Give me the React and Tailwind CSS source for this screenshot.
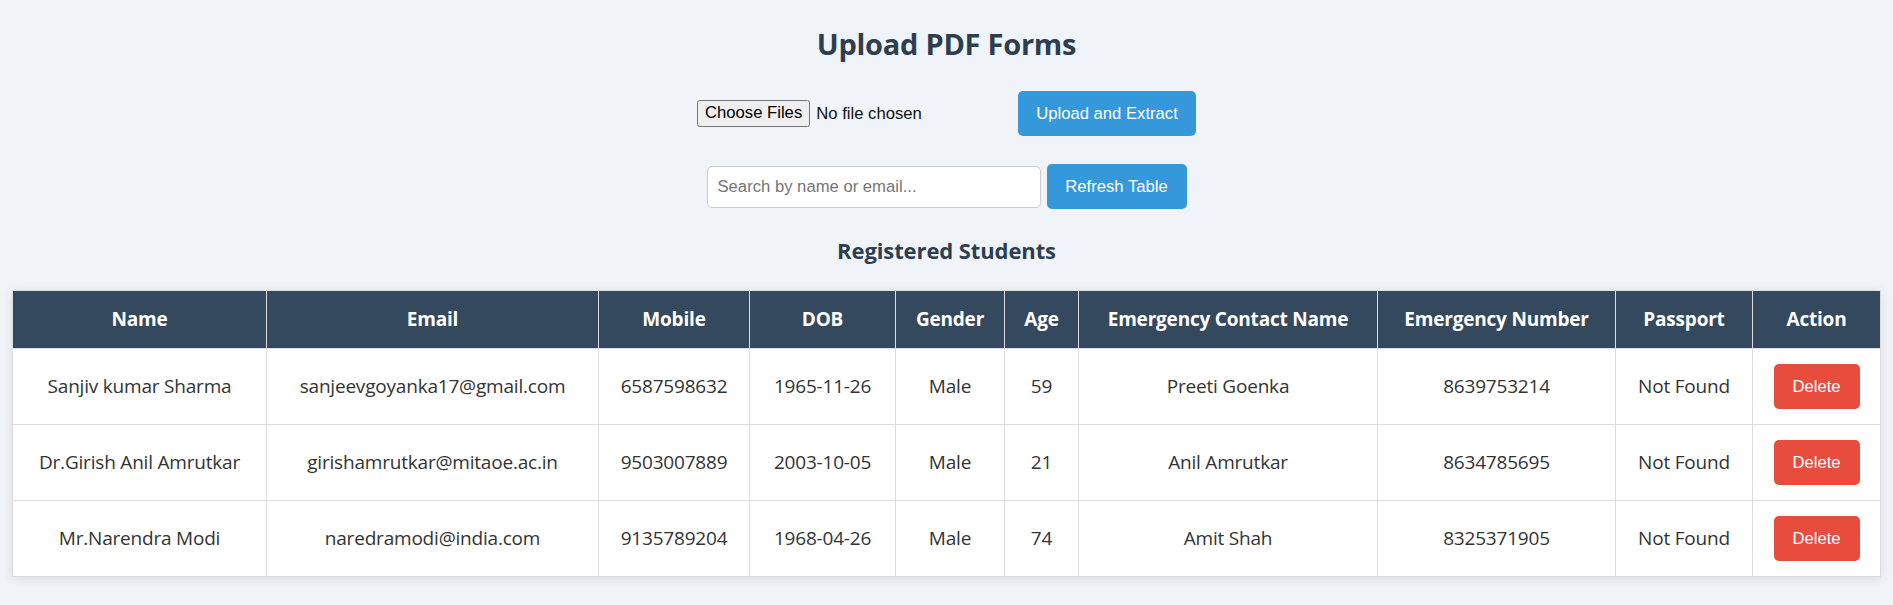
const students = [
  { name: "Sanjiv kumar Sharma", email: "sanjeevgoyanka17@gmail.com", mobile: "6587598632", dob: "1965-11-26", gender: "Male", age: 59, ecName: "Preeti Goenka", ecNumber: "8639753214", passport: "Not Found" },
  { name: "Dr.Girish Anil Amrutkar", email: "girishamrutkar@mitaoe.ac.in", mobile: "9503007889", dob: "2003-10-05", gender: "Male", age: 21, ecName: "Anil Amrutkar", ecNumber: "8634785695", passport: "Not Found" },
  { name: "Mr.Narendra Modi", email: "naredramodi@india.com", mobile: "9135789204", dob: "1968-04-26", gender: "Male", age: 74, ecName: "Amit Shah", ecNumber: "8325371905", passport: "Not Found" },
];

const cols = [
  ["Name", "w-[254px]"],
  ["Email", "w-[332px]"],
  ["Mobile", "w-[151px]"],
  ["DOB", "w-[146px]"],
  ["Gender", "w-[109px]"],
  ["Age", "w-[74px]"],
  ["Emergency Contact Name", "w-[299px]"],
  ["Emergency Number", "w-[238px]"],
  ["Passport", "w-[137px]"],
  ["Action", "w-[128px]"],
];

const ui = "font-['Segoe_UI','Open_Sans',sans-serif]";
const arial = "font-['Liberation_Sans',Arial,sans-serif]";
const cell = "border border-[#ddd] px-[15px] py-[15px]";

export default function App() {
  return (
    <div className={`min-h-screen bg-[#f0f4f8] ${ui}`}>
      <div className="px-3 pt-[24px] pb-6">
        <h2 className="text-center text-[29px] leading-[40px] tracking-[-0.25px] font-bold text-[#2c3e50]">Upload PDF Forms</h2>

        {/* Upload row */}
        <div className="flex justify-center items-center mt-[27px] h-[45px]">
          <div className={`w-[308px] flex items-center gap-[6px] ${arial} text-[16.67px]`}>
            <button className="h-[27px] px-[7px] bg-[#efefef] border border-[#767676] rounded-[2.5px] text-black leading-none">Choose Files</button>
            <span className="text-[#111]">No file chosen</span>
          </div>
          <button className={`ml-[13px] h-[45px] w-[178px] bg-[#3498db] text-white rounded-[5px] ${arial} text-[16.67px]`}>
            Upload and Extract
          </button>
        </div>

        {/* Search row */}
        <div className="flex justify-center items-center gap-[6px] mt-[28px] h-[45px]">
          <input
            placeholder="Search by name or email..."
            className={`w-[334px] h-[42px] px-[10px] bg-white border border-[#ccc] rounded-[5px] ${arial} text-[16.67px] placeholder:text-[#757575] outline-none`}
          />
          <button className={`h-[45px] w-[140px] bg-[#3498db] text-white rounded-[5px] ${arial} text-[16.67px]`}>
            Refresh Table
          </button>
        </div>

        <h3 className="text-center text-[22px] leading-[32px] tracking-[-0.1px] font-bold text-[#2c3e50] mt-[25px]">Registered Students</h3>

        <table className="mt-[24px] w-[1868px] table-fixed border-collapse bg-white shadow-[0_2px_10px_rgba(0,0,0,0.1)]">
          <thead>
            <tr className="bg-[#34495e] text-white">
              {cols.map(([h, w]) => (
                <th key={h} className={`${w} ${cell} text-[19px] leading-[27px] tracking-[-0.2px] font-bold text-center`}>{h}</th>
              ))}
            </tr>
          </thead>
          <tbody>
            {students.map(s => (
              <tr key={s.email} className="text-[19px] tracking-[-0.2px] text-[#333] text-center">
                <td className={cell}>{s.name}</td>
                <td className={cell}>{s.email}</td>
                <td className={cell}>{s.mobile}</td>
                <td className={cell}>{s.dob}</td>
                <td className={cell}>{s.gender}</td>
                <td className={cell}>{s.age}</td>
                <td className={cell}>{s.ecName}</td>
                <td className={cell}>{s.ecNumber}</td>
                <td className={cell}>{s.passport}</td>
                <td className={cell}>
                  <button className={`h-[45px] w-[86px] bg-[#e74c3c] text-white rounded-[5px] align-middle tracking-normal ${arial} text-[16.67px]`}>Delete</button>
                </td>
              </tr>
            ))}
          </tbody>
        </table>
      </div>
    </div>
  );
}
